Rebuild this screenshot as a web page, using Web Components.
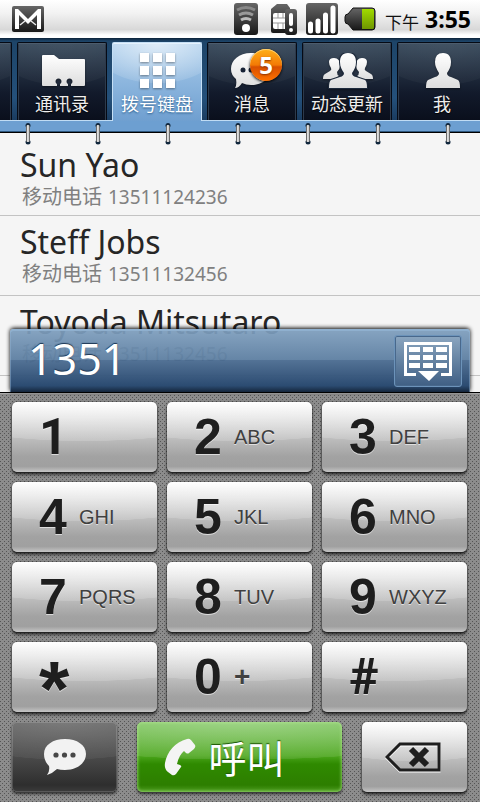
<!DOCTYPE html>
<html lang="zh-CN">
<head>
<meta charset="utf-8">
<meta name="viewport" content="width=device-width">
<title>拨号键盘</title>
<style>
html,body{margin:0;height:100%}
body{font-family:"Noto Sans","Noto Sans CJK SC",sans-serif;background:#f5f5f5}
</style>
</head>
<body>
<phone-app></phone-app>
<script>
const define = (name, html, setup) => customElements.define(name, class extends HTMLElement {
  constructor() {
    super();
    this.attachShadow({ mode: 'open' });
  }
  connectedCallback() {
    if (this.shadowRoot.firstChild) return;
    const t = document.createElement('template');
    t.innerHTML = html;
    this.shadowRoot.append(t.content.cloneNode(true));
    if (setup) setup(this, this.shadowRoot);
  }
});

define('status-bar', `
<style>
:host{display:flex;align-items:center;height:38px;box-sizing:border-box;padding:0 9px 0 12px;
 background:linear-gradient(#fff,#f2f2f2 35%,#d8d8d8 78%,#fff 92%,#fff)}
svg{display:block;flex:none}
.mail{margin-right:auto}
.icons{display:flex;align-items:center;gap:6px;margin-right:9px}
.ampm{font-size:17px;color:#111;margin-right:6px;padding-top:4px}
time{font:bold 23px "Open Sans","Noto Sans",sans-serif;color:#000}
</style>
<svg class="mail" width="32" height="26" viewBox="0 0 32 26" aria-label="Gmail"><defs><linearGradient id="g" x2="0" y2="1"><stop stop-color="#666"/><stop offset="1" stop-color="#181818"/></linearGradient></defs><rect width="32" height="26" rx="2" fill="url(#g)"/><path d="M3 23V3h3l10 10L26 3h3v20h-4V9l-9 9-9-9v14z" fill="#fff"/><path d="M8 19l5-4M24 19l-5-4" stroke="#eee" stroke-width="1.4"/></svg>
<div class="icons">
<svg width="24" height="32" viewBox="0 0 24 32"><defs><linearGradient id="g" x2="0" y2="1"><stop stop-color="#555"/><stop offset="1" stop-color="#050505"/></linearGradient></defs><rect width="24" height="32" rx="3" fill="url(#g)"/><g fill="none" stroke-width="3"><path d="M3 7q9-5 18 0" stroke="#888"/><path d="M5 12q7-4 14 0" stroke="#999"/><path d="M7 17q5-3 10 0" stroke="#bbb"/></g><circle cx="12" cy="25" r="4" fill="#fff"/></svg>
<svg width="36" height="32" viewBox="-7 0 36 32"><defs><linearGradient id="g" x2="0" y2="1"><stop stop-color="#555"/><stop offset="1" stop-color="#050505"/></linearGradient></defs><path d="M6 1h10l3 4v25H2q-2 0-2-2V6z" fill="url(#g)"/><path d="M4 10h11v16H4q-2 0-2-2V12q0-2 2-2z" fill="#fff"/><path d="M2 15h13M2 20h13M7 10v5M12 10v5M7 20v6M12 20v6" stroke="#999"/><rect x="14" y="6" width="12" height="26" rx="3" fill="url(#g)"/><path d="M20 12v9M20 27v.01" stroke="#fff" stroke-width="4" stroke-linecap="round"/></svg>
<svg width="32" height="32" viewBox="0 0 32 32"><defs><linearGradient id="g" x2="0" y2="1"><stop stop-color="#555"/><stop offset="1" stop-color="#050505"/></linearGradient></defs><rect width="32" height="32" rx="3" fill="url(#g)"/><path d="M4.500 21v7M12 18v10M19.500 12v16M27 5v23" stroke="#fff" stroke-width="5" stroke-linecap="round"/></svg>
<svg width="32" height="24" viewBox="0 0 32 24"><defs><linearGradient id="g" x2="0" y2="1"><stop stop-color="#555"/><stop offset="1" stop-color="#111"/></linearGradient><linearGradient id="h" x2="0" y2="1"><stop stop-color="#a0dc00"/><stop offset="1" stop-color="#6f9600"/></linearGradient></defs><path d="M9 1h19q3 0 3 3v16q0 3-3 3H9l-5-6q-3 0-3-3v-4q0-3 3-3z" fill="url(#g)" stroke="#111"/><path d="M18 2h11q1 0 1 2v16q0 2-1 2H18z" fill="url(#h)"/></svg>
</div>
<span class="ampm">下午</span><time>3:55</time>`);

define('tab-button', `
<style>
:host{display:block;flex:none;width:90px;height:78px}
button{all:unset;box-sizing:border-box;cursor:pointer;width:100%;height:100%;position:relative;display:flex;flex-direction:column;align-items:center;
 padding-top:10px;gap:2px;border:1px solid #050a14;border-bottom:0;border-radius:2px 2px 0 0;color:#eee;
 font-size:18px;line-height:26px;white-space:nowrap;text-shadow:0 1px 1px #000;
 background:radial-gradient(ellipse 80% 55% at 50% 0,#ffffff10,#ffffff08 98%,transparent),linear-gradient(#36485a,#121a2b 65%,#0a0f1c);
 box-shadow:inset 0 1px #4c5c6d,inset 1px 0 #2d3a4b,inset -1px 0 #2d3a4b}
:host([selected]){height:79px}
:host([selected]) button{color:#fff;border-color:#c5dff5;background:radial-gradient(ellipse 75% 52% at 50% 0,#ffffffa0,#ffffff20 98%,transparent),linear-gradient(#aacdec,#6f9fd0);
 box-shadow:inset 0 1px #e5f2fd;text-shadow:0 1px 2px #2b5e8d}
::slotted(svg){display:block;width:54px;height:36px;margin-left:2px;filter:drop-shadow(0 1px 1px #0006)}
::slotted([slot=badge]){position:absolute;left:42px;top:6px;width:32px;height:32px;box-sizing:border-box;border-radius:50%;
 background:linear-gradient(#ffb018,#f37a05 50%,#d85000 56%,#ff7200);box-shadow:0 1px 3px #000,inset 0 1px #ffd070;
 color:#fff;font:bold 24px/31px "Open Sans",sans-serif;text-align:center;text-shadow:0 1px 2px #8b3000}
</style>
<button role="tab"><slot name="icon"></slot><slot></slot><slot name="badge"></slot></button>`,
(h, r) => r.querySelector('button').setAttribute('aria-selected', h.hasAttribute('selected')));

define('tab-strip', `
<style>
:host{display:block;overflow:hidden;position:relative;padding-top:4px;height:107px;box-sizing:border-box;margin-bottom:-13px;
 background:linear-gradient(#0c2238,#1d4468 3px,#24507a 60px,#1a3c60) 0 0/100% 82px no-repeat}
nav{display:flex;gap:5px;margin-left:-78px;height:78px}
.rail{height:10px;border-top:1px solid #c0dcf4;background:#6d9fd1;border-bottom:1px solid #2e577d;box-shadow:0 1px #000}
.rings{height:22px;margin-top:-9px;position:relative}
.rings svg{display:block;width:100%;height:22px}
tab-button[selected]{position:relative;z-index:1}
</style>
<nav role="tablist">
<tab-button></tab-button>
<tab-button><svg slot="icon" viewBox="0 0 54 36"><defs><linearGradient id="w" x2="0" y2="1"><stop stop-color="#fff"/><stop offset="1" stop-color="#ddd"/></linearGradient></defs><path d="M6 3q0-1 1-1h11l5 4h25q1 0 1 1v25q0 1-1 1H35v-2a3 3 0 1 0-3 0v2h-8v-2a3 3 0 1 0-3 0v2H7q-1 0-1-1z" fill="url(#w)"/></svg>通讯录</tab-button>
<tab-button selected><svg slot="icon" viewBox="0 0 54 36"><path d="M9 0h9v9h-9zM22 0h9v9h-9zM35 0h9v9h-9zM9 13h9v9h-9zM22 13h9v9h-9zM35 13h9v9h-9zM9 26h9v9h-9zM22 26h9v9h-9zM35 26h9v9h-9z" fill="#fff"/></svg>拨号键盘</tab-button>
<tab-button><svg slot="icon" viewBox="0 0 54 36"><defs><linearGradient id="w" x2="0" y2="1"><stop stop-color="#fff"/><stop offset="1" stop-color="#ddd"/></linearGradient></defs><path d="M25 0c12 0 20 7 20 16s-8 16-20 16q-5 0-9-2-3 5-7 5 2-3 1-9-5-4-5-10C5 7 13 0 25 0z" fill="url(#w)"/><g fill="#172235"><circle cx="17" cy="17" r="2.500"/><circle cx="25" cy="17" r="2.500"/></g></svg>消息<span slot="badge">5</span></tab-button>
<tab-button><svg slot="icon" viewBox="0 0 54 36"><defs><linearGradient id="w" x2="0" y2="1"><stop stop-color="#fff"/><stop offset="1" stop-color="#ddd"/></linearGradient><path id="p" d="M17 0c6 0 8 4 8 9 0 5-2 8-4 11q0 3 4 4l9 3q2 1 2 8H-2q0-7 2-8l9-3q4-1 4-4C11 17 9 14 9 9c0-5 2-9 8-9z"/></defs><g fill="url(#w)"><path d="M13 5c4 0 6 3 6 7q0 4-3 7 0 3 2 4l-5 3H2q0-4 2-5l5-3q2-1 1-3-2-3-2-6 0-4 5-4zM41 5c-4 0-6 3-6 7q0 4 3 7 0 3-2 4l5 3h11q0-4-2-5l-5-3q-2-1-1-3 2-3 2-6 0-4-5-4z"/><use href="#p" x="10" stroke="#1d293b" stroke-width="2"/><use href="#p" x="10"/></g></svg>动态更新</tab-button>
<tab-button><svg slot="icon" viewBox="0 0 54 36"><defs><linearGradient id="w" x2="0" y2="1"><stop stop-color="#fff"/><stop offset="1" stop-color="#ddd"/></linearGradient></defs><path d="M27 0c6 0 8 4 8 9 0 5-2 8-4 11q0 3 4 4l7 3q2 1 2 8H10q0-7 2-8l7-3q4-1 4-4-4-6-4-11 0-9 8-9z" fill="url(#w)"/></svg>我</tab-button>
</nav>
<div class="rail"></div>
<div class="rings"><svg aria-hidden="true"><defs><linearGradient id="m"><stop stop-color="#333"/><stop offset=".45" stop-color="#fff"/><stop offset=".7" stop-color="#bbb"/><stop offset="1" stop-color="#333"/></linearGradient><pattern id="r" width="70" height="22" patternUnits="userSpaceOnUse"><circle cx="28" cy="2.500" r="2.500" fill="#10263c"/><circle cx="28" cy="19" r="2.500" fill="#10263c"/><rect x="26" y="2" width="4" height="17" rx="1.500" fill="url(#m)"/></pattern></defs><rect width="100%" height="22" fill="url(#r)"/></svg></div>`);

define('contact-row', `
<style>
:host{display:block;height:80px;box-sizing:border-box;border-bottom:1px solid #c3c3c3;padding:3px 20px 0}
:host(:first-of-type){height:77px}
a{display:block;color:#262626;text-decoration:none;white-space:nowrap}
.name{font:32px/46px "Noto Sans",sans-serif}
.phone{color:#808080;display:flex;align-items:baseline;gap:6px;line-height:18px;padding-left:2px}
::slotted([slot=kind]){font-family:"Liberation Sans","Noto Sans CJK SC",sans-serif;font-size:20px}
::slotted([slot=number]){font-size:19px}
</style>
<a href="#"><div class="name"><slot></slot></div><div class="phone"><slot name="kind"></slot><slot name="number"></slot></div></a>`);

define('contact-list', `
<style>:host{display:block;background:#f5f5f5;padding-top:7px;box-sizing:border-box;overflow:hidden}</style>
<slot></slot>`);

define('dial-display', `
<style>
:host{display:flex;align-items:center;justify-content:space-between;gap:12px;height:63px;box-sizing:border-box;padding:4px 8px 4px 18px;border-radius:4px 4px 0 0;
 background:linear-gradient(#7f9fbeee,#5c7ea1f0 49%,#4a6b90f2 50%,#2c4c72 90%,#15263c);
 box-shadow:0 -1px 4px #000,inset 0 2px #8fb0cf,inset 1px 0 #8fb0cf80,inset -1px 0 #8fb0cf80}
input{all:unset;flex:1;min-width:0;padding-bottom:4px;font:43px/50px "Noto Sans",sans-serif;color:#fff;text-shadow:0 -1px 1px #1a3552}
button{all:unset;cursor:pointer;box-sizing:border-box;width:68px;height:52px;border:1px solid #6c93ba;border-radius:3px;display:grid;place-items:center;
 background:linear-gradient(#8ba6c0,#3f5f84);box-shadow:inset 0 0 0 1px #48688c}
svg{display:block}
</style>
<input type="tel" value="1351" aria-label="电话号码">
<button aria-label="收起键盘"><svg width="48" height="42" viewBox="0 0 48 42"><path d="M0 2h48v34H37v-3h8V5H3v28h9v3H0z" fill="#fff"/><path d="M5 7h11v5H5zM19 7h10v5H19zM32 7h11v5H32zM5 15h11v5H5zM19 15h10v5H19zM32 15h11v5H32zM5 23h11v5H5zM19 23h10v5H19zM32 23h11v5H32zM14 31h21L25 41z" fill="#fff"/></svg></button>`);

const keyBox = `
button{all:unset;cursor:pointer;box-sizing:border-box;width:100%;height:70px;border-radius:5px;display:flex;align-items:center;
 background:radial-gradient(ellipse 120% 56% at 50% 0,#ffffff50,#ffffff28 99%,transparent),linear-gradient(#fff,#e4e4e4 22%,#bababa 55%,#a2a2a2 78%,#a0a0a0 92%,#c4c4c4);
 box-shadow:0 1px 1px #222,0 3px 3px #0008,0 0 2px #0008}`;

define('dial-key', `
<style>:host{display:block;min-width:0}${keyBox}
button{padding-left:27px;font-family:"Liberation Sans",Arial,sans-serif;color:#1e1e1e;text-shadow:0 1px #fff9}
b{font-size:50px;line-height:70px;width:40px;flex:none}
:host([plain]) b{font-family:Roboto,sans-serif}
:host([star]) b{font-size:78px;height:70px;padding-top:12px;box-sizing:border-box}
span{font-size:20px;color:#404040}
:host([plus]) span{font-size:28px;font-weight:bold}
</style>
<button><b><slot></slot></b><span><slot name="sub"></slot></span></button>`);

define('action-key', `
<style>:host{display:block;min-width:0}${keyBox}
button{justify-content:center;gap:12px;color:#fff;font:38px/70px "Noto Sans CJK SC",sans-serif;text-shadow:0 -1px 1px #1c5500}
:host([kind=dark]) button{background:radial-gradient(ellipse 120% 54% at 50% 0,#ffffff28,#ffffff0c 99%,transparent),linear-gradient(#626262,#4a4a4a 50%,#2e2e2e 90%,#3c3c3c);box-shadow:0 2px 3px #000a,inset 0 0 0 1px #ffffff28}
:host([kind=call]) button{padding-right:30px;background:radial-gradient(ellipse 120% 54% at 50% 0,#ffffff50,#ffffff18 99%,transparent),linear-gradient(#72c050,#4ba61c 48%,#2f8a00 60%,#2d7e00 90%,#4d9d20);box-shadow:0 2px 3px #000a,inset 0 0 3px 1px #b2e890a0}
::slotted(svg){display:block;flex:none}
</style>
<button><slot name="icon"></slot><slot></slot></button>`,
(h, r) => { const l = h.getAttribute('label'); if (l) r.querySelector('button').setAttribute('aria-label', l); });

define('dial-pad', `
<style>
:host{display:block;position:relative;border-top:1px solid #000;padding:9px 13px 10px 12px;
 background:conic-gradient(from 0deg at 1px 1px,transparent 75%,#555 0) 0 0/4px 4px,conic-gradient(from 0deg at 1px 1px,transparent 75%,#555 0) 2px 2px/4px 4px,#8c8c8c;
 box-shadow:inset 0 1px #aaa}
dial-display{position:absolute;left:10px;right:10px;bottom:calc(100% + 1px)}
.keys{display:grid;grid-template-columns:repeat(3,1fr);gap:10px}
.actions{display:grid;grid-template-columns:105fr 205fr 105fr;gap:20px;margin-top:10px}
</style>
<dial-display></dial-display>
<div class="keys"></div>
<div class="actions">
<action-key kind="dark" label="短信"><svg slot="icon" width="42" height="37" viewBox="0 0 42 37"><path d="M21 0c12 0 21 6 21 15S33 31 21 31q-5 0-8-1-4 4-10 6 3-4 2-9-5-5-5-12C0 6 9 0 21 0z" fill="#f2f2f2"/><g fill="#484848"><circle cx="12" cy="16" r="2.600"/><circle cx="20.500" cy="16" r="2.600"/><circle cx="29" cy="16" r="2.600"/></g></svg></action-key>
<action-key kind="call"><svg slot="icon" width="32" height="38" viewBox="0 0 32 38"><path d="M23 1q2-1 4 1l4 5q1 2-1 4l-5 4q-1 1-3 0l-2-2q-5 4-7 13l3 1q2 1 1 2l-5 7q-2 2-4 1l-4-3q-4-3-3-9C3 14 11 4 23 1z" fill="#f4f4f4"/></svg>呼叫</action-key>
<action-key label="删除"><svg slot="icon" width="60" height="31" viewBox="0 0 60 31"><path d="M15 2h39v26H15L2 15z" fill="none" stroke="#fff" stroke-width="3" transform="translate(0 1)"/><path d="M15 2h39v26H15L2 15z" fill="none" stroke="#1e1e1e" stroke-width="3"/><path d="M26 7l16 16M42 7L26 23" stroke="#1e1e1e" stroke-width="6"/></svg></action-key>
</div>`, (h, r) => {
  const keys = [['1', '', 'plain'], ['2', 'ABC'], ['3', 'DEF'], ['4', 'GHI'], ['5', 'JKL'], ['6', 'MNO'], ['7', 'PQRS'], ['8', 'TUV'], ['9', 'WXYZ'], ['*', '', 'star'], ['0', '+', 'plus'], ['#', '', 'plain']];
  r.querySelector('.keys').innerHTML = keys.map(([d, s, kind = '']) =>
    `<dial-key ${kind}>${d}${s ? `<span slot="sub">${s}</span>` : ''}</dial-key>`).join('');
});

define('phone-app', `
<style>
:host{display:flex;flex-direction:column;min-height:100vh}
contact-list{flex:1 0 0;min-height:200px}
</style>
<status-bar></status-bar>
<tab-strip></tab-strip>
<contact-list>
<contact-row>Sun Yao<span slot="kind">移动电话</span><span slot="number">13511124236</span></contact-row>
<contact-row>Steff Jobs<span slot="kind">移动电话</span><span slot="number">13511132456</span></contact-row>
<contact-row>Toyoda Mitsutaro<span slot="kind">移动电话</span><span slot="number">13511132456</span></contact-row>
</contact-list>
<dial-pad></dial-pad>`);
</script>
</body>
</html>
